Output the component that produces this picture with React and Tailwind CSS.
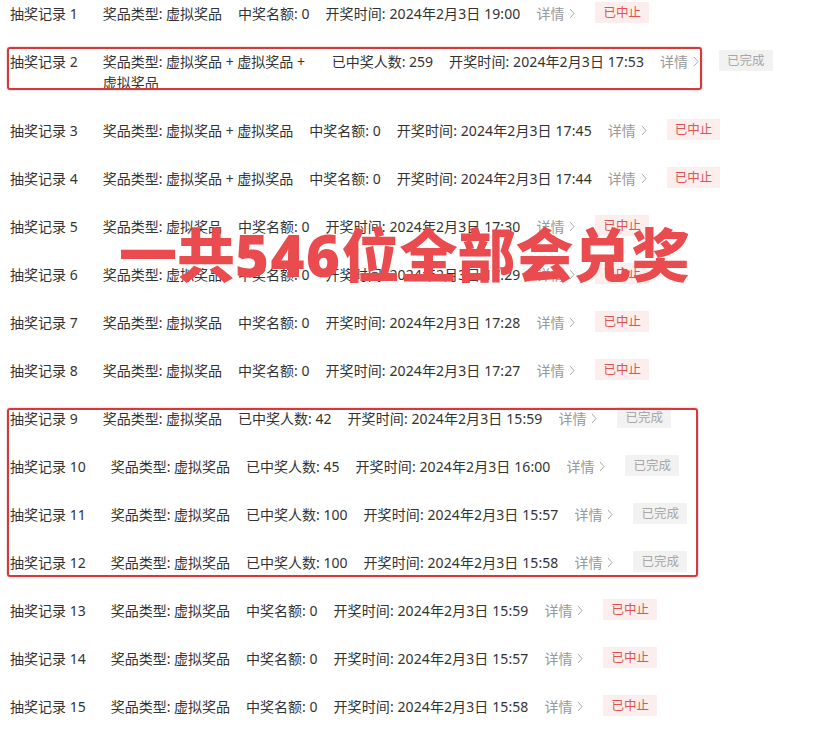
import React from 'react';

const records = [
  { no: 1, type: '虚拟奖品', stat: '中奖名额: 0', time: '2024年2月3日 19:00', status: 'stopped' },
  { no: 2, type: '虚拟奖品 + 虚拟奖品 + 虚拟奖品', stat: '已中奖人数: 259', time: '2024年2月3日 17:53', status: 'done' },
  { no: 3, type: '虚拟奖品 + 虚拟奖品', stat: '中奖名额: 0', time: '2024年2月3日 17:45', status: 'stopped' },
  { no: 4, type: '虚拟奖品 + 虚拟奖品', stat: '中奖名额: 0', time: '2024年2月3日 17:44', status: 'stopped' },
  { no: 5, type: '虚拟奖品', stat: '中奖名额: 0', time: '2024年2月3日 17:30', status: 'stopped' },
  { no: 6, type: '虚拟奖品', stat: '中奖名额: 0', time: '2024年2月3日 17:29', status: 'stopped' },
  { no: 7, type: '虚拟奖品', stat: '中奖名额: 0', time: '2024年2月3日 17:28', status: 'stopped' },
  { no: 8, type: '虚拟奖品', stat: '中奖名额: 0', time: '2024年2月3日 17:27', status: 'stopped' },
  { no: 9, type: '虚拟奖品', stat: '已中奖人数: 42', time: '2024年2月3日 15:59', status: 'done' },
  { no: 10, type: '虚拟奖品', stat: '已中奖人数: 45', time: '2024年2月3日 16:00', status: 'done' },
  { no: 11, type: '虚拟奖品', stat: '已中奖人数: 100', time: '2024年2月3日 15:57', status: 'done' },
  { no: 12, type: '虚拟奖品', stat: '已中奖人数: 100', time: '2024年2月3日 15:58', status: 'done' },
  { no: 13, type: '虚拟奖品', stat: '中奖名额: 0', time: '2024年2月3日 15:59', status: 'stopped' },
  { no: 14, type: '虚拟奖品', stat: '中奖名额: 0', time: '2024年2月3日 15:57', status: 'stopped' },
  { no: 15, type: '虚拟奖品', stat: '中奖名额: 0', time: '2024年2月3日 15:58', status: 'stopped' },
];

// 状态标签
const StatusTag = ({ status }) =>
  status === 'done' ? (
    <span className="ml-1 mt-[-0.5px] px-2 h-[21px] flex items-center text-[12.5px] bg-[#f2f2f2] text-[#a8a8a8]">已完成</span>
  ) : (
    <span className="ml-1 mt-[-0.5px] px-2 h-[21px] flex items-center text-[12.5px] bg-[#fdeeee] text-[#e0534f]">已中止</span>
  );

const Row = ({ r }) => (
  <div className="flex items-start gap-4 py-[13.5px] pl-[10px] leading-[21px] text-[14px] text-[#333]">
    <span className="mr-[9px] whitespace-nowrap">抽奖记录 {r.no}</span>
    <span className="max-w-[213px]">奖品类型: {r.type}</span>
    <span className="whitespace-nowrap">{r.stat}</span>
    <span className="whitespace-nowrap tracking-[0.1px]">开奖时间: {r.time}</span>
    <span className="flex items-center gap-[5px] whitespace-nowrap text-[#999]">
      详情
      <svg width="6" height="11" viewBox="0 0 6 11" fill="none">
        <path d="M1 1l4 4.5-4 4.5" stroke="#aaa" strokeWidth="1" />
      </svg>
    </span>
    <StatusTag status={r.status} />
  </div>
);

export default function App() {
  return (
    <div
      className="relative w-[840px] h-[731px] overflow-hidden bg-white"
      style={{ fontFamily: '"Noto Sans", "Noto Sans CJK SC", sans-serif' }}
    >
      <div className="-mt-[11px]">
        {records.map(r => (
          <Row key={r.no} r={r} />
        ))}
      </div>

      {/* 标注框 */}
      <div className="absolute left-[7px] top-[47px] w-[695px] h-[43px] rounded-[3px] border-2 border-[#d4393b] shadow-[0_0_2px_rgba(212,57,59,0.5)]" />
      <div className="absolute left-[7px] top-[408px] w-[691px] h-[169px] rounded-[3px] border-2 border-[#d4393b] shadow-[0_0_2px_rgba(212,57,59,0.5)]" />

      {/* 大字标注 */}
      <div className="absolute left-[119px] top-[226px] text-[58px] leading-[58px] font-black text-[#e94b4f] whitespace-nowrap">
        一共<span className="tracking-[1.5px]">546</span>位全部会兑奖
      </div>
    </div>
  );
}
